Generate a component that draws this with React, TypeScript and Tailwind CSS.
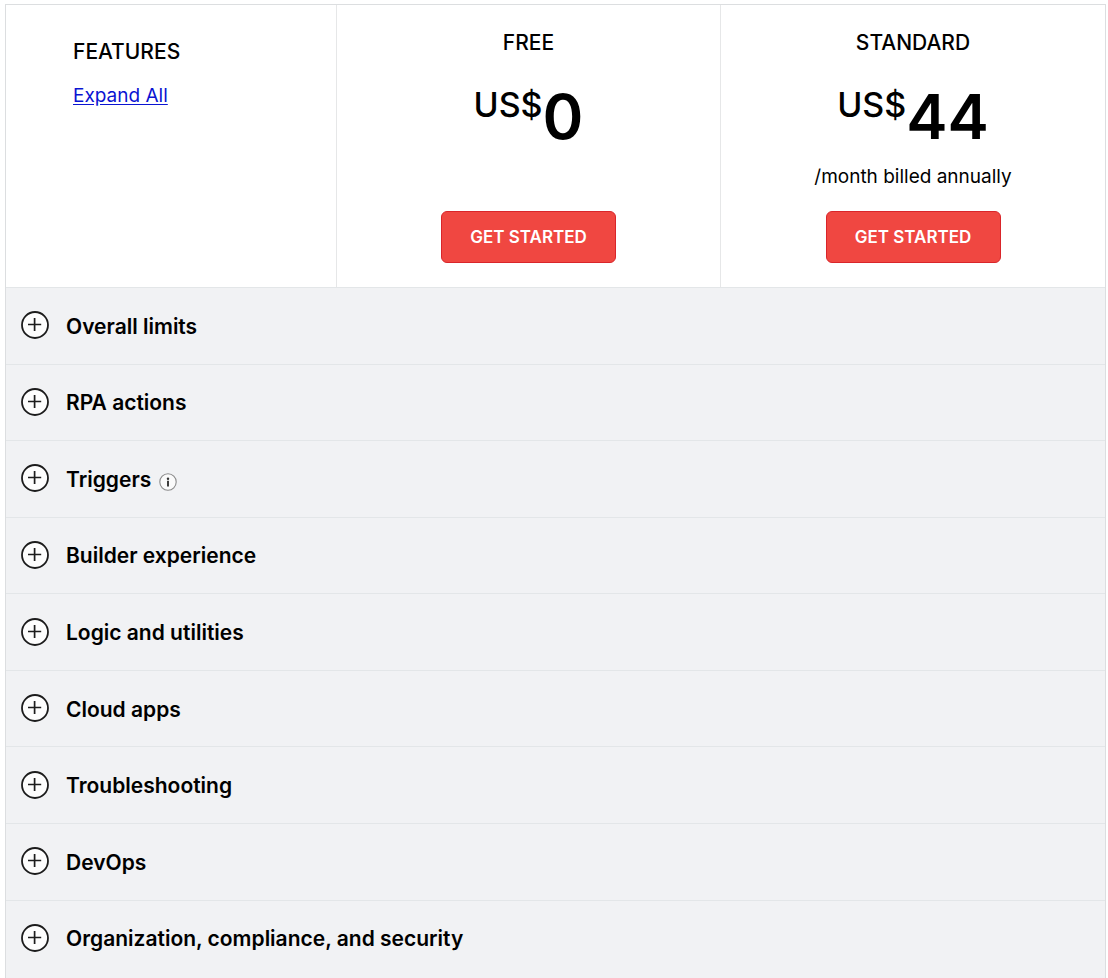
const plans = [
  { name: "FREE", price: "0", note: "" },
  { name: "STANDARD", price: "44", note: "/month billed annually" },
];

const sections = [
  { title: "Overall limits" },
  { title: "RPA actions" },
  { title: "Triggers", info: true },
  { title: "Builder experience" },
  { title: "Logic and utilities" },
  { title: "Cloud apps" },
  { title: "Troubleshooting" },
  { title: "DevOps" },
  { title: "Organization, compliance, and security" },
];

function PlusIcon() {
  return (
    <svg className="mb-px size-7 shrink-0" viewBox="0 0 28 28" fill="none" aria-hidden="true">
      <circle cx="14" cy="14" r="13" fill="#fdfdfd" stroke="#1c1c1c" strokeWidth="1.8" />
      <path d="M13.6 7v13M7 13.5h13.2" stroke="#1c1c1c" strokeWidth="1.7" />
    </svg>
  );
}

function InfoIcon() {
  return (
    <svg className="size-[18px] shrink-0" viewBox="0 0 18 18" fill="none" aria-hidden="true">
      <circle cx="9" cy="9" r="8.2" fill="#fafafa" stroke="#8b8b8b" strokeWidth="1.1" />
      <circle cx="9" cy="5.7" r="1.2" fill="#333" />
      <path d="M9 7.8v5.8" stroke="#333" strokeWidth="1.9" />
    </svg>
  );
}

export default function App() {
  return (
    <main className="flex min-h-screen flex-col bg-white pl-[5px] pr-0.5 pt-1 font-['Inter',sans-serif] text-black">
      <div className="flex grow flex-col border-x border-t border-[#dcdee0]">
        <header className="grid grid-cols-[331fr_384fr_384fr] divide-x divide-[#e6e7e8]">
          <div className="pl-[67px] pt-[31px]">
            <h2 className="text-[21px] leading-8 font-medium">FEATURES</h2>
            <a href="#features" className="mt-4 inline-block text-[19px] leading-6 text-[#0a14d2] underline underline-offset-2">
              Expand All
            </a>
          </div>
          {plans.map((plan) => (
            <section key={plan.name} className="flex flex-col items-center pt-[22px] pb-6">
              <h3 className="text-[21px] leading-8 font-medium">{plan.name}</h3>
              <p className="mt-[22px] flex h-[72px] items-start font-medium">
                <span className="text-[34px] leading-[48px]">US$</span>
                <span className="text-[62px] leading-[72px] font-semibold">{plan.price}</span>
              </p>
              <p className="mt-3 h-8 text-[19px] leading-6">{plan.note}</p>
              <button
                type="button"
                className="mt-3.5 h-[52px] w-[175px] rounded-md border border-[#d9252a] bg-[#f04741] pt-0.5 text-[17px] font-semibold text-white"
              >
                GET STARTED
              </button>
            </section>
          ))}
        </header>
        <div className="flex grow flex-col bg-[#f1f2f4] pb-0.5">
          {sections.map((section) => (
            <button
              key={section.title}
              type="button"
              aria-expanded="false"
              className="flex flex-1 items-center border-t border-[#e3e6e8] py-5 pl-[15px] text-left"
            >
              <PlusIcon />
              <span className="ml-[17px] pt-0.5 text-[21px] leading-8 font-semibold">{section.title}</span>
              {section.info && (
                <span className="ml-2 pt-1.5">
                  <InfoIcon />
                </span>
              )}
            </button>
          ))}
        </div>
      </div>
    </main>
  );
}
